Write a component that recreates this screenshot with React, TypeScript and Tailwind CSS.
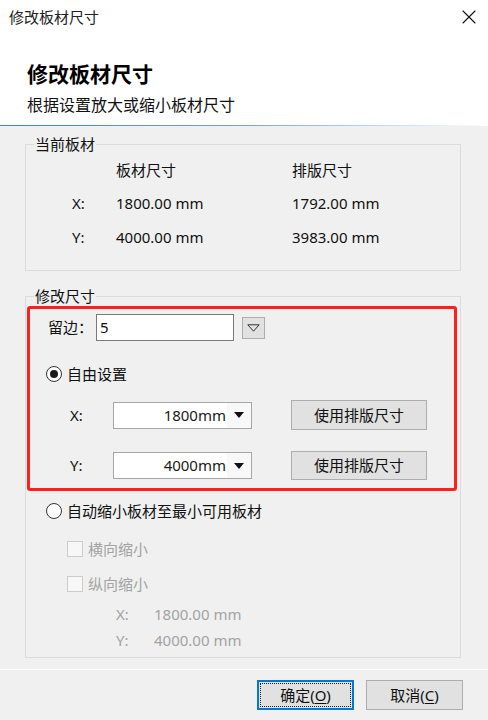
import { X } from "lucide-react";

const FONT = "font-['Noto_Sans','Noto_Sans_CJK_SC',sans-serif]";

// Windows-style combo box with a filled arrow on the right
const SizeCombo = ({ value }: { value: string }) => (
  <div className="flex h-[27px] w-[139px] items-stretch border border-[#a6a6a6] bg-white">
    <div className="flex flex-1 items-center justify-end pr-[1px] text-[15px] text-[#1a1a1a]">{value}</div>
    <div className="flex w-[24px] items-center justify-center bg-[#f8f8f8]">
      <svg width="10" height="6" viewBox="0 0 10 6">
        <path d="M0 0h10L5 6z" fill="#111" />
      </svg>
    </div>
  </div>
);

const Button = ({ children, className = "" }: { children: React.ReactNode; className?: string }) => (
  <div
    className={`flex items-center justify-center border border-[#adadad] bg-[#e1e1e1] text-[15px] text-[#111] ${className}`}
  >
    {children}
  </div>
);

const Radio = ({ checked }: { checked?: boolean }) => (
  <div className="flex h-[16px] w-[16px] items-center justify-center rounded-full border border-[#333] bg-white">
    {checked ? <div className="h-[8px] w-[8px] rounded-full bg-[#1a1a1a]" /> : null}
  </div>
);

const Checkbox = () => <div className="h-[16px] w-[16px] border border-[#cccccc] bg-[#f7f7f7]" />;

const App = () => {
  return (
    <div className={`flex h-[720px] w-[488px] flex-col bg-[#f0f0f0] ${FONT}`}>
      {/* Header */}
      <div className="flex h-[125px] flex-col bg-white">
        <div className="flex h-[34px] items-center justify-between pl-[9px] pr-[7px]">
          <span className="text-[15px] leading-none text-[#222]">修改板材尺寸</span>
          <X className="h-[24px] w-[24px] text-[#111]" strokeWidth={1.1} />
        </div>
        <div className="mt-[26px] pl-[27px] text-[21px] font-bold leading-[28px] text-black">修改板材尺寸</div>
        <div className="mt-[6px] pl-[27px] text-[16px] leading-[22px] text-[#111]">根据设置放大或缩小板材尺寸</div>
      </div>
      <div className="h-[1px] bg-gradient-to-r from-[#3b86d6] via-[#6aa6e4] to-[#ffffff]" />

      {/* Current board */}
      <fieldset className="ml-[25px] mt-[8px] w-[436px] border border-[#dcdcdc] pb-[16px] pl-[8px]">
        <legend className="px-[1px] text-[15px] leading-[20px] text-[#111]">当前板材</legend>
        <div className="text-[15px] text-[#111]">
          <div className="flex h-[32px] items-center pl-[82px]">
            <span className="w-[176px]">板材尺寸</span>
            <span>排版尺寸</span>
          </div>
          <div className="flex h-[34px] items-center pl-[38px]">
            <span className="w-[44px]">X:</span>
            <span className="w-[176px]">1800.00 mm</span>
            <span>1792.00 mm</span>
          </div>
          <div className="flex h-[34px] items-center pl-[38px]">
            <span className="w-[44px]">Y:</span>
            <span className="w-[176px]">4000.00 mm</span>
            <span>3983.00 mm</span>
          </div>
        </div>
      </fieldset>

      {/* Modify size */}
      <fieldset className="ml-[25px] mt-[15px] w-[436px] border border-[#dcdcdc] pb-[7px] pl-[8px]">
        <legend className="px-[1px] text-[15px] leading-[20px] text-[#111]">修改尺寸</legend>
        <div className="-ml-[7px] flex w-[430px] flex-col rounded-[3px] border-[3px] border-[#ff1f1f] pb-[8px] pt-[5px] text-[15px] text-[#111]">
          <div className="flex h-[27px] items-center pl-[18px]">
            <span className="w-[48px]">留边：</span>
            <div className="flex h-[27px] w-[138px] items-center border border-[#7a7a7a] bg-white pl-[3px]">5</div>
            <div className="ml-[8px] flex h-[22px] w-[23px] items-center justify-center border border-[#adadad] bg-[#e1e1e1]">
              <svg width="13" height="8" viewBox="0 0 13 8">
                <path d="M0.8 0.8h11.4L6.5 7.2z" fill="none" stroke="#333" strokeWidth="1" />
              </svg>
            </div>
          </div>
          <div className="mt-[23px] flex h-[20px] items-center gap-[5px] pl-[16px]">
            <Radio checked />
            <span>自由设置</span>
          </div>
          <div className="mt-[16px] flex h-[30px] items-center pl-[40px]">
            <span className="w-[43px]">X:</span>
            <SizeCombo value="1800mm" />
            <Button className="ml-[39px] h-[30px] w-[136px]">使用排版尺寸</Button>
          </div>
          <div className="mt-[21px] flex h-[29px] items-center pl-[40px]">
            <span className="w-[43px]">Y:</span>
            <SizeCombo value="4000mm" />
            <Button className="ml-[39px] h-[29px] w-[136px]">使用排版尺寸</Button>
          </div>
        </div>

        <div className="mt-[10px] flex h-[20px] items-center gap-[5px] pl-[12px] text-[15px] text-[#111]">
          <Radio />
          <span>自动缩小板材至最小可用板材</span>
        </div>
        <div className="mt-[18px] flex h-[20px] items-center gap-[5px] pl-[33px] text-[15px] text-[#a3a3a3]">
          <Checkbox />
          <span>横向缩小</span>
        </div>
        <div className="mt-[15px] flex h-[20px] items-center gap-[5px] pl-[33px] text-[15px] text-[#a3a3a3]">
          <Checkbox />
          <span>纵向缩小</span>
        </div>
        <div className="mt-[10px] flex h-[20px] items-center pl-[82px] text-[15px] text-[#a3a3a3]">
          <span className="w-[38px]">X:</span>
          <span>1800.00 mm</span>
        </div>
        <div className="mt-[6px] flex h-[20px] items-center pl-[82px] text-[15px] text-[#a3a3a3]">
          <span className="w-[38px]">Y:</span>
          <span>4000.00 mm</span>
        </div>
      </fieldset>

      {/* Footer */}
      <div className="mt-[11px] h-[1px] bg-white" />
      <div className="mt-[10px] flex justify-end gap-[12px] pr-[25px]">
        <div className="flex h-[30px] w-[97px] items-center justify-center border-2 border-[#0078d7] bg-[#e1e1e1] p-[1px]">
          <div className="flex h-full w-full items-center justify-center border border-dotted border-[#222] text-[15px] text-[#111]">
            确定(<span className="underline underline-offset-2">O</span>)
          </div>
        </div>
        <Button className="h-[30px] w-[97px]">
          取消(<span className="underline underline-offset-2">C</span>)
        </Button>
      </div>
    </div>
  );
};

export default App;
